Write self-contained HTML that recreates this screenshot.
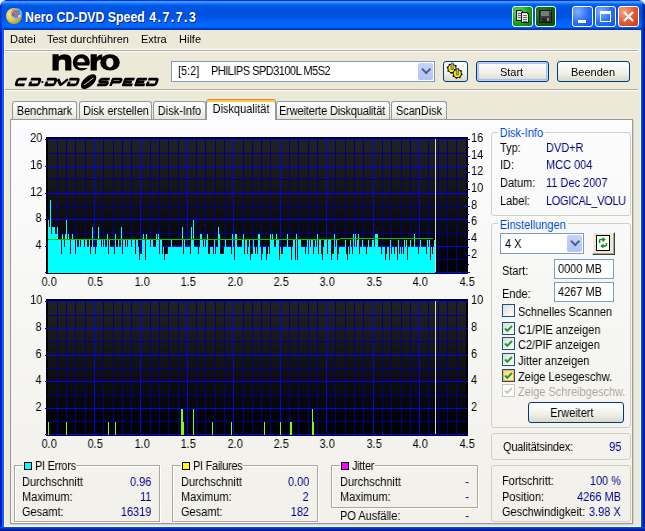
<!DOCTYPE html>
<html><head><meta charset="utf-8"><style>
*{margin:0;padding:0;box-sizing:border-box}
html,body{width:645px;height:531px;overflow:hidden;background:#f6f2e2}
body{position:relative;-webkit-font-smoothing:antialiased;font-family:"Liberation Sans",sans-serif;font-size:11px;color:#000}
#win{position:absolute;left:0;top:0;width:645px;height:531px;background:#ece9d8;border-radius:6px 6px 0 0;overflow:hidden}
.fr{position:absolute}
#frameX{position:absolute;left:0;top:0;width:645px;height:531px;border:4px solid #0842db;border-top:0;
  box-shadow:inset 2px 0 0 #0019cf,inset -2px 0 0 #0019cf, inset 0 -2px 0 #001ea8}
#title{position:absolute;left:0;top:0;width:645px;height:30px;border-radius:6px 6px 0 0;
  background:linear-gradient(to bottom,#0831d9 0,#0831d9 1px,#3d95ff 1px,#3d95ff 3px,#1a80ff 3px,#0a6ef5 4px,#0060ea 5px,#0054e2 7px,#0053e0 17px,#0058ea 18px,#005ef2 21px,#0066fe 22px,#0066fe 27px,#0050e0 28px,#0032b4 29px,#0032b4 30px)}
#ttl{position:absolute;left:25px;top:9px;font:bold 14px/16px "Liberation Sans",sans-serif;color:#fff;text-shadow:1px 1px 0 #0a1e8c;white-space:nowrap;transform:scaleX(0.88);transform-origin:0 0}
.tb{position:absolute;top:6px;width:21px;height:21px;border:1px solid #fff;border-radius:3px}
.tb.g1{background:radial-gradient(circle at 30% 30%,#60e060,#10a010 60%,#0a700a)}
.tb.g2{background:radial-gradient(circle at 30% 30%,#208a20,#0a600a 60%,#055005)}
.tb.bl{background:radial-gradient(circle at 25% 25%,#7fb0ff,#2a6df5 55%,#1550e0)}
.tb.rd{background:radial-gradient(circle at 25% 25%,#f8a080,#e05a30 55%,#c83a10)}
.t{position:absolute;white-space:nowrap;line-height:13px;font-size:12px;will-change:transform;transform:scaleX(0.915);transform-origin:0 0}
.tr{transform-origin:100% 0}
.t.s11{font-size:11px;transform:none}
.v{color:#000080}
.cap{color:#0046d5;padding:0 2px}
.dis{color:#aca899}
.ax{color:#000}
.hs{position:absolute;left:4px;width:637px;height:3px;border-top:1px solid #fff;border-bottom:1px solid #fff;background:#aca899;background-clip:content-box;}
#nero{position:absolute;left:50px;top:45px;font:bold 30px "Liberation Sans",sans-serif;letter-spacing:-1.5px;color:#111;transform:scaleX(1.05);transform-origin:left}
.cb{position:absolute;background:#fff;border:1px solid #7f9db9}
.cbb{position:absolute;background:linear-gradient(#c6d3f7,#b0c4f4);border-radius:2px}
.cbb::after{content:"";position:absolute;left:4px;top:5px;width:5px;height:5px;border-right:2px solid #4d6185;border-bottom:2px solid #4d6185;transform:rotate(45deg) translate(-1px,-2px)}
.btn{position:absolute;border:1px solid #003c74;border-radius:3px;background:linear-gradient(#fff,#f0f0ea 60%,#d8d8cc)}
.btn.def{box-shadow:inset 0 0 0 1px #c0d4f8, inset 0 0 0 2px #a8c0f0}
.btn3{position:absolute;background:#ece9d8;border:1px solid;border-color:#fff #404040 #404040 #fff;box-shadow:inset -1px -1px 0 #aca899}
.ed{position:absolute;background:#fff;border:1px solid #7f9db9}
#panel{position:absolute;left:10px;top:119px;width:623px;height:405px;border:1px solid #919b9c;border-right-width:1px;
  background:linear-gradient(to bottom,#fcfcfe 0%,#f1f0ea 100%);box-shadow:1px 1px 0 #d8d6c8}
.tab{position:absolute;top:101px;height:18px;border:1px solid #919b9c;border-bottom:0;border-radius:3px 3px 0 0;
  background:linear-gradient(#fefefe,#f0f0ea 70%,#e4e3d8)}
.tab span{position:absolute;left:0;right:0;top:3px;text-align:center;white-space:nowrap;will-change:transform;font-size:12px;line-height:13px;transform:scaleX(0.915)}
.tab.sel{top:99px;height:21px;background:#fcfcfe;border-top:1px solid #e68b2c;z-index:2;box-shadow:inset 0 2px 0 #ffc83c}
.tab.sel span{top:3px}
.gb{position:absolute;border:1px solid #d0d0bf;border-radius:3px}
.lg{position:absolute;border:1px solid #aca899}
.lgw{position:absolute;border:1px solid #fff}
.lgc{position:absolute;height:10px}
.sq{position:absolute;width:8px;height:8px;border:1px solid #000}
.ck{position:absolute;width:13px;height:13px;border:1px solid #1c5180;background:linear-gradient(135deg,#dcdcd7,#fff)}
.ck.hot{background:linear-gradient(135deg,#fad688,#fff2c8);box-shadow:inset 0 0 0 1px #f8b636}
.ck.dis{border-color:#cac8bb;background:#fff}
</style></head>
<body><div id="win">
<div id="title"></div>
<div style="position:absolute;left:641px;top:4px;width:4px;height:26px;background:linear-gradient(to right,rgba(0,40,200,0.1),rgba(0,30,160,0.6) 50%,rgba(0,20,120,0.9))"></div>
<div style="position:absolute;left:0;top:5px;width:2px;height:25px;background:linear-gradient(to right,rgba(0,25,180,0.8),rgba(0,40,200,0.3))"></div>
<div id="ttl">Nero CD-DVD Speed<span style="margin-left:5px;letter-spacing:1.7px">4.7.7.3</span></div>
<svg style="position:absolute;left:5px;top:7px" width="19" height="19" viewBox="0 0 19 19">
<defs><radialGradient id="dg" cx="35%" cy="40%" r="70%"><stop offset="0" stop-color="#f8f0a0"/><stop offset="0.55" stop-color="#e0c848"/><stop offset="1" stop-color="#b09020"/></radialGradient>
<clipPath id="ic"><circle cx="11.5" cy="6.8" r="4.2"/></clipPath></defs>
<circle cx="9" cy="9" r="8" fill="url(#dg)"/>
<circle cx="11.5" cy="6.8" r="5.3" fill="#c8ccd8" stroke="#8890a0" stroke-width="0.8"/>
<g clip-path="url(#ic)">
<rect x="6" y="1" width="11" height="11" fill="#3a9ae8"/>
<path d="M8 2 L11 4 L13 8 L15 10 L13 11 L11 8 L8 5 Z" fill="#f06030"/>
<path d="M12 2 L16 3 L15 5 Z" fill="#30a040"/>
<path d="M7 5 L9 8 L8 10 L6 8 Z" fill="#c01010"/>
<circle cx="14.5" cy="9.5" r="1.3" fill="#fff"/>
</g>
</svg>
<div class="tb g1" style="left:512px"></div>
<div class="tb g2" style="left:535px"></div>
<div class="tb bl" style="left:572px"></div>
<div class="tb bl" style="left:595px"></div>
<div class="tb rd" style="left:618px"></div>
<svg style="position:absolute;left:512px;top:6px" width="21" height="21" shape-rendering="crispEdges">
<path d="M4.5 4.5H9.5L11 6V14.5H4.5Z" fill="#d8d8d8" stroke="#1a1a1a"/>
<path d="M6 7H9M6 9H9M6 11H9" stroke="#707070"/>
<path d="M9.5 6.5H15L16.5 8V16.5H9.5Z" fill="#e4e4e4" stroke="#1a1a1a"/>
<path d="M11 9H15M11 11H15M11 13H15M11 15H15" stroke="#707070"/>
</svg>
<svg style="position:absolute;left:535px;top:6px" width="21" height="21" shape-rendering="crispEdges">
<path d="M4.5 4.5H16.5V16.5H4.5Z" fill="#3c3c3c" stroke="#181818"/>
<rect x="6" y="5" width="8" height="5" fill="#7a7a7a"/>
<rect x="7" y="12" width="8" height="4" fill="#262626"/>
<rect x="12" y="12" width="2" height="3" fill="#8a8a8a"/>
<rect x="15" y="5" width="1" height="1" fill="#30c030"/>
</svg>
<div style="position:absolute;left:578px;top:20px;width:8px;height:3px;background:#fff"></div>
<div style="position:absolute;left:600px;top:11px;width:9px;height:9px;border:1px solid #fff;border-top-width:3px;box-sizing:border-box;width:11px;height:11px"></div>
<svg style="position:absolute;left:618px;top:6px" width="21" height="21"><path d="M6 6L15 15M15 6L6 15" stroke="#fff" stroke-width="2.2"/></svg>
<div class="t s11" style="left:10px;top:33px;">Datei</div>
<div class="t s11" style="left:47px;top:33px;">Test durchführen</div>
<div class="t s11" style="left:141px;top:33px;">Extra</div>
<div class="t s11" style="left:179px;top:33px;">Hilfe</div>
<div style="position:absolute;left:4px;top:49px;width:637px;height:1px;background:#fff"></div>
<div style="position:absolute;left:4px;top:50px;width:634px;height:1px;background:#aca899"></div>
<div style="position:absolute;left:4px;top:51px;width:635px;height:1px;background:#fff"></div>
<div style="position:absolute;left:4px;top:89px;width:634px;height:1px;background:#aca899"></div>
<div style="position:absolute;left:4px;top:90px;width:635px;height:1px;background:#fff"></div>
<svg style="position:absolute;left:0;top:0" width="170" height="95" viewBox="0 0 170 95">
<g fill="#000">
<path d="M52.5 54.2H58.7V56.6Q61 54.2 64.6 54.2Q71.4 54.2 71.4 60.6V70.6H65.2V61.8Q65.2 59.4 62.1 59.4Q58.7 59.4 58.7 62.4V70.6H52.5Z"/>
<ellipse cx="81.3" cy="62.4" rx="8.5" ry="8.2"/>
<path d="M90.6 54.2H96.8V57.2Q98.8 54.2 102.2 54.2V59.6Q96.8 59.6 96.8 63.6V70.6H90.6Z"/>
<ellipse cx="110" cy="62.4" rx="9.8" ry="8.2"/>
</g>
<path d="M77.3 62.3Q77.5 58.2 81 58.2Q84.7 58.2 84.8 62.3Z" fill="#ece9d8"/>
<path d="M77.2 65.4H90.2V68H82Q78 68 77.2 65.4Z" fill="#ece9d8"/>
<ellipse cx="109.8" cy="62.7" rx="3.7" ry="4.8" fill="#ece9d8"/>
<g fill="none" stroke="#000" stroke-width="2.6" stroke-linejoin="round"><path transform="translate(14.2,86) skewX(-20)" d="M10 -6.9 H2.8 Q1.1 -6.9 1.1 -5.2 V-2.8 Q1.1 -1.1 2.8 -1.1 H10"/><path transform="translate(28.2,86) skewX(-20)" d="M0.2 -6.9 H7.8 Q9.6 -6.9 9.6 -5.2 V-2.8 Q9.6 -1.1 7.8 -1.1 H1.1 V-4.6"/><path transform="translate(44.2,86) skewX(-20)" d="M0.2 -6.9 H7.8 Q9.6 -6.9 9.6 -5.2 V-2.8 Q9.6 -1.1 7.8 -1.1 H1.1 V-4.6"/><path transform="translate(55.2,86) skewX(-20)" d="M0.3 -6.9 L4.6 -1.6 Q5.2 -0.9 5.8 -1.6 L10.2 -6.9"/><path transform="translate(66.6,86) skewX(-20)" d="M0.2 -6.9 H7.8 Q9.6 -6.9 9.6 -5.2 V-2.8 Q9.6 -1.1 7.8 -1.1 H1.1 V-4.6"/><path transform="translate(96.8,86) skewX(-20)" d="M10.4 -6.9 H2.8 Q1.1 -6.9 1.1 -5.4 Q1.1 -4 2.8 -4 H7.9 Q9.6 -4 9.6 -2.6 Q9.6 -1.1 7.9 -1.1 H0"/><path transform="translate(109.4,86) skewX(-20)" d="M1.1 0 V-6.9 H7.9 Q9.6 -6.9 9.6 -5.3 Q9.6 -3.7 7.9 -3.7 H1.1"/><path transform="translate(121.8,86) skewX(-20)" d="M10.2 -6.9 H1.1 V-1.1 H10.2 M1.1 -4 H8.6"/><path transform="translate(134.2,86) skewX(-20)" d="M10.2 -6.9 H1.1 V-1.1 H10.2 M1.1 -4 H8.6"/><path transform="translate(145.6,86) skewX(-20)" d="M0.2 -6.9 H7.8 Q9.6 -6.9 9.6 -5.2 V-2.8 Q9.6 -1.1 7.8 -1.1 H1.1 V-4.6"/></g>
<circle cx="42.4" cy="82" r="1.1" fill="#000"/>
<ellipse cx="88.6" cy="81.6" rx="9.4" ry="5" transform="rotate(-42 88.6 81.6)" fill="#000"/>
<path d="M84 85L93.5 78" stroke="#ece9d8" stroke-width="0.9"/>
</svg>
<div class="cb" style="left:171px;top:61px;width:264px;height:21px"><div class="cbb" style="right:1px;top:1px;width:15px;height:17px"></div></div>
<div class="t " style="left:178px;top:65px;">[5:2]</div>
<div class="t " style="left:211px;top:65px;letter-spacing:-0.55px">PHILIPS SPD3100L M5S2</div>
<div class="btn" style="left:443px;top:61px;width:25px;height:21px"></div>
<svg style="position:absolute;left:441px;top:59px" width="28" height="25" viewBox="0 0 28 25">
<polygon points="16.49,10.51 14.57,11.80 14.09,14.07 11.82,13.62 9.89,14.89 8.60,12.97 6.33,12.49 6.78,10.22 5.51,8.29 7.43,7.00 7.91,4.73 10.18,5.18 12.11,3.91 13.40,5.83 15.67,6.31 15.22,8.58" fill="#000"/>
<circle cx="11" cy="9.4" r="3.6" fill="#f8f000"/>
<polygon points="21.79,15.71 19.87,17.00 19.39,19.27 17.12,18.82 15.19,20.09 13.90,18.17 11.63,17.69 12.08,15.42 10.81,13.49 12.73,12.20 13.21,9.93 15.48,10.38 17.41,9.11 18.70,11.03 20.97,11.51 20.52,13.78" fill="#000"/>
<circle cx="16.3" cy="14.6" r="3.6" fill="#f8f000"/>
<rect x="10" y="4" width="2.2" height="6.5" fill="#a8a8b8" stroke="#404048" stroke-width="0.6"/>
<rect x="15.2" y="9.4" width="2.2" height="6.5" fill="#a8a8b8" stroke="#404048" stroke-width="0.6"/>
</svg>
<div class="btn def" style="left:476px;top:61px;width:73px;height:21px"></div>
<div class="t s11" style="left:497px;top:66px;width:29px;text-align:center">Start</div>
<div class="btn" style="left:557px;top:61px;width:73px;height:21px"></div>
<div class="t s11" style="left:571px;top:66px;">Beenden</div>
<div id="panel"></div>
<div class="tab" style="left:12px;width:65px"><span>Benchmark</span></div>
<div class="tab" style="left:79px;width:73px"><span>Disk erstellen</span></div>
<div class="tab" style="left:153px;width:53px"><span>Disk-Info</span></div>
<div class="tab" style="left:276px;width:114px"><span><i style="font-style:normal;letter-spacing:-0.15px;position:relative;left:-3px">Erweiterte Diskqualität</i></span></div>
<div class="tab" style="left:391px;width:56px"><span>ScanDisk</span></div>
<div class="tab sel" style="left:206px;width:70px"><span>Diskqualität</span></div>
<svg class="ch" width="645" height="200" style="position:absolute;left:0;top:127px" shape-rendering="crispEdges"><defs><linearGradient id="bg137" x1="0" y1="0" x2="0" y2="1"><stop offset="0" stop-color="#222"/><stop offset="1" stop-color="#000"/></linearGradient></defs><rect x="46" y="10" width="22" height="137" fill="#000"/><rect x="48" y="10" width="420" height="137" fill="#000"/><rect x="46" y="11" width="422" height="136" fill="#000"/><rect x="48" y="12" width="418" height="133" fill="url(#bg137)"/><rect x="57" y="12" width="1" height="135" fill="#000090"/><rect x="66" y="12" width="1" height="135" fill="#000090"/><rect x="75" y="12" width="1" height="135" fill="#000090"/><rect x="85" y="12" width="1" height="135" fill="#000090"/><rect x="94" y="12" width="1" height="135" fill="#0000ff"/><rect x="103" y="12" width="1" height="135" fill="#000090"/><rect x="113" y="12" width="1" height="135" fill="#000090"/><rect x="122" y="12" width="1" height="135" fill="#000090"/><rect x="131" y="12" width="1" height="135" fill="#000090"/><rect x="140" y="12" width="1" height="135" fill="#0000ff"/><rect x="150" y="12" width="1" height="135" fill="#000090"/><rect x="159" y="12" width="1" height="135" fill="#000090"/><rect x="168" y="12" width="1" height="135" fill="#000090"/><rect x="178" y="12" width="1" height="135" fill="#000090"/><rect x="187" y="12" width="1" height="135" fill="#0000ff"/><rect x="196" y="12" width="1" height="135" fill="#000090"/><rect x="205" y="12" width="1" height="135" fill="#000090"/><rect x="215" y="12" width="1" height="135" fill="#000090"/><rect x="224" y="12" width="1" height="135" fill="#000090"/><rect x="233" y="12" width="1" height="135" fill="#0000ff"/><rect x="243" y="12" width="1" height="135" fill="#000090"/><rect x="252" y="12" width="1" height="135" fill="#000090"/><rect x="261" y="12" width="1" height="135" fill="#000090"/><rect x="270" y="12" width="1" height="135" fill="#000090"/><rect x="280" y="12" width="1" height="135" fill="#0000ff"/><rect x="289" y="12" width="1" height="135" fill="#000090"/><rect x="298" y="12" width="1" height="135" fill="#000090"/><rect x="308" y="12" width="1" height="135" fill="#000090"/><rect x="317" y="12" width="1" height="135" fill="#000090"/><rect x="326" y="12" width="1" height="135" fill="#0000ff"/><rect x="335" y="12" width="1" height="135" fill="#000090"/><rect x="345" y="12" width="1" height="135" fill="#000090"/><rect x="354" y="12" width="1" height="135" fill="#000090"/><rect x="363" y="12" width="1" height="135" fill="#000090"/><rect x="373" y="12" width="1" height="135" fill="#0000ff"/><rect x="382" y="12" width="1" height="135" fill="#000090"/><rect x="391" y="12" width="1" height="135" fill="#000090"/><rect x="401" y="12" width="1" height="135" fill="#000090"/><rect x="410" y="12" width="1" height="135" fill="#000090"/><rect x="419" y="12" width="1" height="135" fill="#0000ff"/><rect x="428" y="12" width="1" height="135" fill="#000090"/><rect x="438" y="12" width="1" height="135" fill="#000090"/><rect x="447" y="12" width="1" height="135" fill="#000090"/><rect x="456" y="12" width="1" height="135" fill="#000090"/><rect x="45" y="12" width="423" height="1" fill="#0000ff"/><rect x="46" y="26" width="422" height="1" fill="#000090"/><rect x="45" y="39" width="423" height="1" fill="#0000ff"/><rect x="46" y="52" width="422" height="1" fill="#000090"/><rect x="45" y="66" width="423" height="1" fill="#0000ff"/><rect x="46" y="79" width="422" height="1" fill="#000090"/><rect x="45" y="92" width="423" height="1" fill="#0000ff"/><rect x="46" y="106" width="422" height="1" fill="#000090"/><rect x="45" y="119" width="423" height="1" fill="#0000ff"/><rect x="46" y="132" width="422" height="1" fill="#000090"/><rect x="45" y="145" width="423" height="1" fill="#0000ff"/><rect x="48" y="93" width="1" height="53" fill="#00ffff"/><rect x="49" y="100" width="1" height="46" fill="#00ffff"/><rect x="50" y="73" width="1" height="73" fill="#00ffff"/><rect x="51" y="107" width="1" height="39" fill="#00ffff"/><rect x="52" y="100" width="1" height="46" fill="#00ffff"/><rect x="53" y="100" width="1" height="46" fill="#00ffff"/><rect x="54" y="100" width="1" height="46" fill="#00ffff"/><rect x="55" y="107" width="1" height="39" fill="#00ffff"/><rect x="56" y="107" width="1" height="39" fill="#00ffff"/><rect x="57" y="100" width="1" height="46" fill="#00ffff"/><rect x="58" y="113" width="1" height="33" fill="#00ffff"/><rect x="59" y="113" width="1" height="33" fill="#00ffff"/><rect x="60" y="113" width="1" height="33" fill="#00ffff"/><rect x="61" y="127" width="1" height="19" fill="#00ffff"/><rect x="62" y="107" width="1" height="39" fill="#00ffff"/><rect x="63" y="113" width="1" height="33" fill="#00ffff"/><rect x="64" y="120" width="1" height="26" fill="#00ffff"/><rect x="65" y="107" width="1" height="39" fill="#00ffff"/><rect x="66" y="93" width="1" height="53" fill="#00ffff"/><rect x="67" y="113" width="1" height="33" fill="#00ffff"/><rect x="68" y="107" width="1" height="39" fill="#00ffff"/><rect x="69" y="113" width="1" height="33" fill="#00ffff"/><rect x="70" y="127" width="1" height="19" fill="#00ffff"/><rect x="71" y="113" width="1" height="33" fill="#00ffff"/><rect x="72" y="107" width="1" height="39" fill="#00ffff"/><rect x="73" y="113" width="1" height="33" fill="#00ffff"/><rect x="74" y="113" width="1" height="33" fill="#00ffff"/><rect x="75" y="127" width="1" height="19" fill="#00ffff"/><rect x="76" y="113" width="1" height="33" fill="#00ffff"/><rect x="77" y="120" width="1" height="26" fill="#00ffff"/><rect x="78" y="120" width="1" height="26" fill="#00ffff"/><rect x="79" y="113" width="1" height="33" fill="#00ffff"/><rect x="80" y="120" width="1" height="26" fill="#00ffff"/><rect x="81" y="113" width="1" height="33" fill="#00ffff"/><rect x="82" y="113" width="1" height="33" fill="#00ffff"/><rect x="83" y="113" width="1" height="33" fill="#00ffff"/><rect x="84" y="120" width="1" height="26" fill="#00ffff"/><rect x="85" y="113" width="1" height="33" fill="#00ffff"/><rect x="86" y="113" width="1" height="33" fill="#00ffff"/><rect x="87" y="120" width="1" height="26" fill="#00ffff"/><rect x="88" y="120" width="1" height="26" fill="#00ffff"/><rect x="89" y="113" width="1" height="33" fill="#00ffff"/><rect x="90" y="127" width="1" height="19" fill="#00ffff"/><rect x="91" y="120" width="1" height="26" fill="#00ffff"/><rect x="92" y="100" width="1" height="46" fill="#00ffff"/><rect x="93" y="120" width="1" height="26" fill="#00ffff"/><rect x="94" y="120" width="1" height="26" fill="#00ffff"/><rect x="95" y="127" width="1" height="19" fill="#00ffff"/><rect x="96" y="120" width="1" height="26" fill="#00ffff"/><rect x="97" y="113" width="1" height="33" fill="#00ffff"/><rect x="98" y="100" width="1" height="46" fill="#00ffff"/><rect x="99" y="113" width="1" height="33" fill="#00ffff"/><rect x="100" y="113" width="1" height="33" fill="#00ffff"/><rect x="101" y="120" width="1" height="26" fill="#00ffff"/><rect x="102" y="113" width="1" height="33" fill="#00ffff"/><rect x="103" y="120" width="1" height="26" fill="#00ffff"/><rect x="104" y="113" width="1" height="33" fill="#00ffff"/><rect x="105" y="120" width="1" height="26" fill="#00ffff"/><rect x="106" y="120" width="1" height="26" fill="#00ffff"/><rect x="107" y="107" width="1" height="39" fill="#00ffff"/><rect x="108" y="127" width="1" height="19" fill="#00ffff"/><rect x="109" y="113" width="1" height="33" fill="#00ffff"/><rect x="110" y="120" width="1" height="26" fill="#00ffff"/><rect x="111" y="120" width="1" height="26" fill="#00ffff"/><rect x="112" y="120" width="1" height="26" fill="#00ffff"/><rect x="113" y="120" width="1" height="26" fill="#00ffff"/><rect x="114" y="127" width="1" height="19" fill="#00ffff"/><rect x="115" y="107" width="1" height="39" fill="#00ffff"/><rect x="116" y="120" width="1" height="26" fill="#00ffff"/><rect x="117" y="120" width="1" height="26" fill="#00ffff"/><rect x="118" y="113" width="1" height="33" fill="#00ffff"/><rect x="119" y="120" width="1" height="26" fill="#00ffff"/><rect x="120" y="120" width="1" height="26" fill="#00ffff"/><rect x="121" y="100" width="1" height="46" fill="#00ffff"/><rect x="122" y="127" width="1" height="19" fill="#00ffff"/><rect x="123" y="113" width="1" height="33" fill="#00ffff"/><rect x="124" y="113" width="1" height="33" fill="#00ffff"/><rect x="125" y="120" width="1" height="26" fill="#00ffff"/><rect x="126" y="113" width="1" height="33" fill="#00ffff"/><rect x="127" y="120" width="1" height="26" fill="#00ffff"/><rect x="128" y="113" width="1" height="33" fill="#00ffff"/><rect x="129" y="113" width="1" height="33" fill="#00ffff"/><rect x="130" y="113" width="1" height="33" fill="#00ffff"/><rect x="131" y="120" width="1" height="26" fill="#00ffff"/><rect x="132" y="113" width="1" height="33" fill="#00ffff"/><rect x="133" y="113" width="1" height="33" fill="#00ffff"/><rect x="134" y="113" width="1" height="33" fill="#00ffff"/><rect x="135" y="127" width="1" height="19" fill="#00ffff"/><rect x="136" y="113" width="1" height="33" fill="#00ffff"/><rect x="137" y="113" width="1" height="33" fill="#00ffff"/><rect x="138" y="120" width="1" height="26" fill="#00ffff"/><rect x="139" y="133" width="1" height="13" fill="#00ffff"/><rect x="140" y="127" width="1" height="19" fill="#00ffff"/><rect x="141" y="127" width="1" height="19" fill="#00ffff"/><rect x="142" y="113" width="1" height="33" fill="#00ffff"/><rect x="143" y="107" width="1" height="39" fill="#00ffff"/><rect x="144" y="113" width="1" height="33" fill="#00ffff"/><rect x="145" y="133" width="1" height="13" fill="#00ffff"/><rect x="146" y="107" width="1" height="39" fill="#00ffff"/><rect x="147" y="113" width="1" height="33" fill="#00ffff"/><rect x="148" y="113" width="1" height="33" fill="#00ffff"/><rect x="149" y="113" width="1" height="33" fill="#00ffff"/><rect x="150" y="120" width="1" height="26" fill="#00ffff"/><rect x="151" y="113" width="1" height="33" fill="#00ffff"/><rect x="152" y="113" width="1" height="33" fill="#00ffff"/><rect x="153" y="120" width="1" height="26" fill="#00ffff"/><rect x="154" y="120" width="1" height="26" fill="#00ffff"/><rect x="155" y="120" width="1" height="26" fill="#00ffff"/><rect x="156" y="107" width="1" height="39" fill="#00ffff"/><rect x="157" y="113" width="1" height="33" fill="#00ffff"/><rect x="158" y="107" width="1" height="39" fill="#00ffff"/><rect x="159" y="127" width="1" height="19" fill="#00ffff"/><rect x="160" y="113" width="1" height="33" fill="#00ffff"/><rect x="161" y="113" width="1" height="33" fill="#00ffff"/><rect x="162" y="127" width="1" height="19" fill="#00ffff"/><rect x="163" y="120" width="1" height="26" fill="#00ffff"/><rect x="164" y="133" width="1" height="13" fill="#00ffff"/><rect x="165" y="127" width="1" height="19" fill="#00ffff"/><rect x="166" y="127" width="1" height="19" fill="#00ffff"/><rect x="167" y="127" width="1" height="19" fill="#00ffff"/><rect x="168" y="120" width="1" height="26" fill="#00ffff"/><rect x="169" y="120" width="1" height="26" fill="#00ffff"/><rect x="170" y="120" width="1" height="26" fill="#00ffff"/><rect x="171" y="113" width="1" height="33" fill="#00ffff"/><rect x="172" y="120" width="1" height="26" fill="#00ffff"/><rect x="173" y="120" width="1" height="26" fill="#00ffff"/><rect x="174" y="120" width="1" height="26" fill="#00ffff"/><rect x="175" y="120" width="1" height="26" fill="#00ffff"/><rect x="176" y="120" width="1" height="26" fill="#00ffff"/><rect x="177" y="120" width="1" height="26" fill="#00ffff"/><rect x="178" y="120" width="1" height="26" fill="#00ffff"/><rect x="179" y="120" width="1" height="26" fill="#00ffff"/><rect x="180" y="120" width="1" height="26" fill="#00ffff"/><rect x="181" y="120" width="1" height="26" fill="#00ffff"/><rect x="182" y="100" width="1" height="46" fill="#00ffff"/><rect x="183" y="127" width="1" height="19" fill="#00ffff"/><rect x="184" y="113" width="1" height="33" fill="#00ffff"/><rect x="185" y="120" width="1" height="26" fill="#00ffff"/><rect x="186" y="120" width="1" height="26" fill="#00ffff"/><rect x="187" y="120" width="1" height="26" fill="#00ffff"/><rect x="188" y="120" width="1" height="26" fill="#00ffff"/><rect x="189" y="120" width="1" height="26" fill="#00ffff"/><rect x="190" y="127" width="1" height="19" fill="#00ffff"/><rect x="191" y="100" width="1" height="46" fill="#00ffff"/><rect x="192" y="113" width="1" height="33" fill="#00ffff"/><rect x="193" y="93" width="1" height="53" fill="#00ffff"/><rect x="194" y="120" width="1" height="26" fill="#00ffff"/><rect x="195" y="120" width="1" height="26" fill="#00ffff"/><rect x="196" y="120" width="1" height="26" fill="#00ffff"/><rect x="197" y="120" width="1" height="26" fill="#00ffff"/><rect x="198" y="127" width="1" height="19" fill="#00ffff"/><rect x="199" y="120" width="1" height="26" fill="#00ffff"/><rect x="200" y="107" width="1" height="39" fill="#00ffff"/><rect x="201" y="107" width="1" height="39" fill="#00ffff"/><rect x="202" y="113" width="1" height="33" fill="#00ffff"/><rect x="203" y="120" width="1" height="26" fill="#00ffff"/><rect x="204" y="113" width="1" height="33" fill="#00ffff"/><rect x="205" y="120" width="1" height="26" fill="#00ffff"/><rect x="206" y="113" width="1" height="33" fill="#00ffff"/><rect x="207" y="107" width="1" height="39" fill="#00ffff"/><rect x="208" y="127" width="1" height="19" fill="#00ffff"/><rect x="209" y="127" width="1" height="19" fill="#00ffff"/><rect x="210" y="120" width="1" height="26" fill="#00ffff"/><rect x="211" y="120" width="1" height="26" fill="#00ffff"/><rect x="212" y="120" width="1" height="26" fill="#00ffff"/><rect x="213" y="127" width="1" height="19" fill="#00ffff"/><rect x="214" y="113" width="1" height="33" fill="#00ffff"/><rect x="215" y="127" width="1" height="19" fill="#00ffff"/><rect x="216" y="120" width="1" height="26" fill="#00ffff"/><rect x="217" y="120" width="1" height="26" fill="#00ffff"/><rect x="218" y="100" width="1" height="46" fill="#00ffff"/><rect x="219" y="107" width="1" height="39" fill="#00ffff"/><rect x="220" y="127" width="1" height="19" fill="#00ffff"/><rect x="221" y="127" width="1" height="19" fill="#00ffff"/><rect x="222" y="127" width="1" height="19" fill="#00ffff"/><rect x="223" y="127" width="1" height="19" fill="#00ffff"/><rect x="224" y="120" width="1" height="26" fill="#00ffff"/><rect x="225" y="113" width="1" height="33" fill="#00ffff"/><rect x="226" y="120" width="1" height="26" fill="#00ffff"/><rect x="227" y="120" width="1" height="26" fill="#00ffff"/><rect x="228" y="120" width="1" height="26" fill="#00ffff"/><rect x="229" y="120" width="1" height="26" fill="#00ffff"/><rect x="230" y="120" width="1" height="26" fill="#00ffff"/><rect x="231" y="127" width="1" height="19" fill="#00ffff"/><rect x="232" y="107" width="1" height="39" fill="#00ffff"/><rect x="233" y="120" width="1" height="26" fill="#00ffff"/><rect x="234" y="133" width="1" height="13" fill="#00ffff"/><rect x="235" y="107" width="1" height="39" fill="#00ffff"/><rect x="236" y="107" width="1" height="39" fill="#00ffff"/><rect x="237" y="120" width="1" height="26" fill="#00ffff"/><rect x="238" y="120" width="1" height="26" fill="#00ffff"/><rect x="239" y="120" width="1" height="26" fill="#00ffff"/><rect x="240" y="120" width="1" height="26" fill="#00ffff"/><rect x="241" y="120" width="1" height="26" fill="#00ffff"/><rect x="242" y="113" width="1" height="33" fill="#00ffff"/><rect x="243" y="107" width="1" height="39" fill="#00ffff"/><rect x="244" y="127" width="1" height="19" fill="#00ffff"/><rect x="245" y="113" width="1" height="33" fill="#00ffff"/><rect x="246" y="113" width="1" height="33" fill="#00ffff"/><rect x="247" y="127" width="1" height="19" fill="#00ffff"/><rect x="248" y="120" width="1" height="26" fill="#00ffff"/><rect x="249" y="113" width="1" height="33" fill="#00ffff"/><rect x="250" y="133" width="1" height="13" fill="#00ffff"/><rect x="251" y="127" width="1" height="19" fill="#00ffff"/><rect x="252" y="127" width="1" height="19" fill="#00ffff"/><rect x="253" y="113" width="1" height="33" fill="#00ffff"/><rect x="254" y="120" width="1" height="26" fill="#00ffff"/><rect x="255" y="127" width="1" height="19" fill="#00ffff"/><rect x="256" y="120" width="1" height="26" fill="#00ffff"/><rect x="257" y="127" width="1" height="19" fill="#00ffff"/><rect x="258" y="107" width="1" height="39" fill="#00ffff"/><rect x="259" y="107" width="1" height="39" fill="#00ffff"/><rect x="260" y="120" width="1" height="26" fill="#00ffff"/><rect x="261" y="133" width="1" height="13" fill="#00ffff"/><rect x="262" y="127" width="1" height="19" fill="#00ffff"/><rect x="263" y="120" width="1" height="26" fill="#00ffff"/><rect x="264" y="120" width="1" height="26" fill="#00ffff"/><rect x="265" y="120" width="1" height="26" fill="#00ffff"/><rect x="266" y="133" width="1" height="13" fill="#00ffff"/><rect x="267" y="127" width="1" height="19" fill="#00ffff"/><rect x="268" y="120" width="1" height="26" fill="#00ffff"/><rect x="269" y="127" width="1" height="19" fill="#00ffff"/><rect x="270" y="107" width="1" height="39" fill="#00ffff"/><rect x="271" y="113" width="1" height="33" fill="#00ffff"/><rect x="272" y="107" width="1" height="39" fill="#00ffff"/><rect x="273" y="113" width="1" height="33" fill="#00ffff"/><rect x="274" y="120" width="1" height="26" fill="#00ffff"/><rect x="275" y="120" width="1" height="26" fill="#00ffff"/><rect x="276" y="107" width="1" height="39" fill="#00ffff"/><rect x="277" y="113" width="1" height="33" fill="#00ffff"/><rect x="278" y="113" width="1" height="33" fill="#00ffff"/><rect x="279" y="133" width="1" height="13" fill="#00ffff"/><rect x="280" y="120" width="1" height="26" fill="#00ffff"/><rect x="281" y="127" width="1" height="19" fill="#00ffff"/><rect x="282" y="127" width="1" height="19" fill="#00ffff"/><rect x="283" y="120" width="1" height="26" fill="#00ffff"/><rect x="284" y="120" width="1" height="26" fill="#00ffff"/><rect x="285" y="120" width="1" height="26" fill="#00ffff"/><rect x="286" y="120" width="1" height="26" fill="#00ffff"/><rect x="287" y="107" width="1" height="39" fill="#00ffff"/><rect x="288" y="120" width="1" height="26" fill="#00ffff"/><rect x="289" y="120" width="1" height="26" fill="#00ffff"/><rect x="290" y="120" width="1" height="26" fill="#00ffff"/><rect x="291" y="133" width="1" height="13" fill="#00ffff"/><rect x="292" y="120" width="1" height="26" fill="#00ffff"/><rect x="293" y="113" width="1" height="33" fill="#00ffff"/><rect x="294" y="113" width="1" height="33" fill="#00ffff"/><rect x="295" y="133" width="1" height="13" fill="#00ffff"/><rect x="296" y="107" width="1" height="39" fill="#00ffff"/><rect x="297" y="133" width="1" height="13" fill="#00ffff"/><rect x="298" y="113" width="1" height="33" fill="#00ffff"/><rect x="299" y="113" width="1" height="33" fill="#00ffff"/><rect x="300" y="113" width="1" height="33" fill="#00ffff"/><rect x="301" y="120" width="1" height="26" fill="#00ffff"/><rect x="302" y="120" width="1" height="26" fill="#00ffff"/><rect x="303" y="120" width="1" height="26" fill="#00ffff"/><rect x="304" y="120" width="1" height="26" fill="#00ffff"/><rect x="305" y="127" width="1" height="19" fill="#00ffff"/><rect x="306" y="120" width="1" height="26" fill="#00ffff"/><rect x="307" y="113" width="1" height="33" fill="#00ffff"/><rect x="308" y="127" width="1" height="19" fill="#00ffff"/><rect x="309" y="113" width="1" height="33" fill="#00ffff"/><rect x="310" y="120" width="1" height="26" fill="#00ffff"/><rect x="311" y="113" width="1" height="33" fill="#00ffff"/><rect x="312" y="113" width="1" height="33" fill="#00ffff"/><rect x="313" y="127" width="1" height="19" fill="#00ffff"/><rect x="314" y="120" width="1" height="26" fill="#00ffff"/><rect x="315" y="113" width="1" height="33" fill="#00ffff"/><rect x="316" y="120" width="1" height="26" fill="#00ffff"/><rect x="317" y="107" width="1" height="39" fill="#00ffff"/><rect x="318" y="127" width="1" height="19" fill="#00ffff"/><rect x="319" y="113" width="1" height="33" fill="#00ffff"/><rect x="320" y="113" width="1" height="33" fill="#00ffff"/><rect x="321" y="127" width="1" height="19" fill="#00ffff"/><rect x="322" y="133" width="1" height="13" fill="#00ffff"/><rect x="323" y="120" width="1" height="26" fill="#00ffff"/><rect x="324" y="113" width="1" height="33" fill="#00ffff"/><rect x="325" y="113" width="1" height="33" fill="#00ffff"/><rect x="326" y="113" width="1" height="33" fill="#00ffff"/><rect x="327" y="127" width="1" height="19" fill="#00ffff"/><rect x="328" y="113" width="1" height="33" fill="#00ffff"/><rect x="329" y="113" width="1" height="33" fill="#00ffff"/><rect x="330" y="113" width="1" height="33" fill="#00ffff"/><rect x="331" y="133" width="1" height="13" fill="#00ffff"/><rect x="332" y="127" width="1" height="19" fill="#00ffff"/><rect x="333" y="127" width="1" height="19" fill="#00ffff"/><rect x="334" y="107" width="1" height="39" fill="#00ffff"/><rect x="335" y="120" width="1" height="26" fill="#00ffff"/><rect x="336" y="113" width="1" height="33" fill="#00ffff"/><rect x="337" y="133" width="1" height="13" fill="#00ffff"/><rect x="338" y="127" width="1" height="19" fill="#00ffff"/><rect x="339" y="120" width="1" height="26" fill="#00ffff"/><rect x="340" y="120" width="1" height="26" fill="#00ffff"/><rect x="341" y="120" width="1" height="26" fill="#00ffff"/><rect x="342" y="120" width="1" height="26" fill="#00ffff"/><rect x="343" y="120" width="1" height="26" fill="#00ffff"/><rect x="344" y="120" width="1" height="26" fill="#00ffff"/><rect x="345" y="113" width="1" height="33" fill="#00ffff"/><rect x="346" y="127" width="1" height="19" fill="#00ffff"/><rect x="347" y="133" width="1" height="13" fill="#00ffff"/><rect x="348" y="120" width="1" height="26" fill="#00ffff"/><rect x="349" y="127" width="1" height="19" fill="#00ffff"/><rect x="350" y="113" width="1" height="33" fill="#00ffff"/><rect x="351" y="120" width="1" height="26" fill="#00ffff"/><rect x="352" y="127" width="1" height="19" fill="#00ffff"/><rect x="353" y="107" width="1" height="39" fill="#00ffff"/><rect x="354" y="120" width="1" height="26" fill="#00ffff"/><rect x="355" y="107" width="1" height="39" fill="#00ffff"/><rect x="356" y="120" width="1" height="26" fill="#00ffff"/><rect x="357" y="113" width="1" height="33" fill="#00ffff"/><rect x="358" y="107" width="1" height="39" fill="#00ffff"/><rect x="359" y="127" width="1" height="19" fill="#00ffff"/><rect x="360" y="120" width="1" height="26" fill="#00ffff"/><rect x="361" y="120" width="1" height="26" fill="#00ffff"/><rect x="362" y="113" width="1" height="33" fill="#00ffff"/><rect x="363" y="120" width="1" height="26" fill="#00ffff"/><rect x="364" y="120" width="1" height="26" fill="#00ffff"/><rect x="365" y="120" width="1" height="26" fill="#00ffff"/><rect x="366" y="127" width="1" height="19" fill="#00ffff"/><rect x="367" y="120" width="1" height="26" fill="#00ffff"/><rect x="368" y="113" width="1" height="33" fill="#00ffff"/><rect x="369" y="120" width="1" height="26" fill="#00ffff"/><rect x="370" y="120" width="1" height="26" fill="#00ffff"/><rect x="371" y="120" width="1" height="26" fill="#00ffff"/><rect x="372" y="113" width="1" height="33" fill="#00ffff"/><rect x="373" y="113" width="1" height="33" fill="#00ffff"/><rect x="374" y="120" width="1" height="26" fill="#00ffff"/><rect x="375" y="107" width="1" height="39" fill="#00ffff"/><rect x="376" y="107" width="1" height="39" fill="#00ffff"/><rect x="377" y="107" width="1" height="39" fill="#00ffff"/><rect x="378" y="120" width="1" height="26" fill="#00ffff"/><rect x="379" y="120" width="1" height="26" fill="#00ffff"/><rect x="380" y="120" width="1" height="26" fill="#00ffff"/><rect x="381" y="127" width="1" height="19" fill="#00ffff"/><rect x="382" y="120" width="1" height="26" fill="#00ffff"/><rect x="383" y="120" width="1" height="26" fill="#00ffff"/><rect x="384" y="120" width="1" height="26" fill="#00ffff"/><rect x="385" y="133" width="1" height="13" fill="#00ffff"/><rect x="386" y="127" width="1" height="19" fill="#00ffff"/><rect x="387" y="120" width="1" height="26" fill="#00ffff"/><rect x="388" y="120" width="1" height="26" fill="#00ffff"/><rect x="389" y="133" width="1" height="13" fill="#00ffff"/><rect x="390" y="113" width="1" height="33" fill="#00ffff"/><rect x="391" y="127" width="1" height="19" fill="#00ffff"/><rect x="392" y="120" width="1" height="26" fill="#00ffff"/><rect x="393" y="120" width="1" height="26" fill="#00ffff"/><rect x="394" y="127" width="1" height="19" fill="#00ffff"/><rect x="395" y="120" width="1" height="26" fill="#00ffff"/><rect x="396" y="120" width="1" height="26" fill="#00ffff"/><rect x="397" y="133" width="1" height="13" fill="#00ffff"/><rect x="398" y="113" width="1" height="33" fill="#00ffff"/><rect x="399" y="127" width="1" height="19" fill="#00ffff"/><rect x="400" y="120" width="1" height="26" fill="#00ffff"/><rect x="401" y="127" width="1" height="19" fill="#00ffff"/><rect x="402" y="120" width="1" height="26" fill="#00ffff"/><rect x="403" y="127" width="1" height="19" fill="#00ffff"/><rect x="404" y="113" width="1" height="33" fill="#00ffff"/><rect x="405" y="120" width="1" height="26" fill="#00ffff"/><rect x="406" y="113" width="1" height="33" fill="#00ffff"/><rect x="407" y="133" width="1" height="13" fill="#00ffff"/><rect x="408" y="120" width="1" height="26" fill="#00ffff"/><rect x="409" y="120" width="1" height="26" fill="#00ffff"/><rect x="410" y="113" width="1" height="33" fill="#00ffff"/><rect x="411" y="120" width="1" height="26" fill="#00ffff"/><rect x="412" y="120" width="1" height="26" fill="#00ffff"/><rect x="413" y="120" width="1" height="26" fill="#00ffff"/><rect x="414" y="107" width="1" height="39" fill="#00ffff"/><rect x="415" y="120" width="1" height="26" fill="#00ffff"/><rect x="416" y="120" width="1" height="26" fill="#00ffff"/><rect x="417" y="120" width="1" height="26" fill="#00ffff"/><rect x="418" y="127" width="1" height="19" fill="#00ffff"/><rect x="419" y="120" width="1" height="26" fill="#00ffff"/><rect x="420" y="113" width="1" height="33" fill="#00ffff"/><rect x="421" y="120" width="1" height="26" fill="#00ffff"/><rect x="422" y="120" width="1" height="26" fill="#00ffff"/><rect x="423" y="120" width="1" height="26" fill="#00ffff"/><rect x="424" y="120" width="1" height="26" fill="#00ffff"/><rect x="425" y="120" width="1" height="26" fill="#00ffff"/><rect x="426" y="127" width="1" height="19" fill="#00ffff"/><rect x="427" y="113" width="1" height="33" fill="#00ffff"/><rect x="428" y="120" width="1" height="26" fill="#00ffff"/><rect x="429" y="113" width="1" height="33" fill="#00ffff"/><rect x="430" y="133" width="1" height="13" fill="#00ffff"/><rect x="431" y="120" width="1" height="26" fill="#00ffff"/><rect x="432" y="127" width="1" height="19" fill="#00ffff"/><rect x="433" y="120" width="1" height="26" fill="#00ffff"/><rect x="434" y="113" width="1" height="33" fill="#00ffff"/><rect x="466" y="145" width="4" height="1" fill="#0000ff"/><rect x="466" y="137" width="3" height="1" fill="#0000a0"/><rect x="466" y="128" width="4" height="1" fill="#0000ff"/><rect x="466" y="120" width="3" height="1" fill="#0000a0"/><rect x="466" y="112" width="4" height="1" fill="#0000ff"/><rect x="466" y="103" width="3" height="1" fill="#0000a0"/><rect x="466" y="95" width="4" height="1" fill="#0000ff"/><rect x="466" y="87" width="3" height="1" fill="#0000a0"/><rect x="466" y="79" width="4" height="1" fill="#0000ff"/><rect x="466" y="70" width="3" height="1" fill="#0000a0"/><rect x="466" y="62" width="4" height="1" fill="#0000ff"/><rect x="466" y="54" width="3" height="1" fill="#0000a0"/><rect x="466" y="45" width="4" height="1" fill="#0000ff"/><rect x="466" y="37" width="3" height="1" fill="#0000a0"/><rect x="466" y="29" width="4" height="1" fill="#0000ff"/><rect x="466" y="20" width="3" height="1" fill="#0000a0"/><rect x="466" y="12" width="4" height="1" fill="#0000ff"/><rect x="48" y="112" width="292" height="1" fill="#00c800"/><rect x="340" y="111" width="93" height="1" fill="#00c800"/><rect x="435" y="12" width="1" height="133" fill="#d8d8d8"/></svg><div class="t tr ax" style="right:603px;top:132px;">20</div><div class="t tr ax" style="right:603px;top:159px;">16</div><div class="t tr ax" style="right:603px;top:186px;">12</div><div class="t tr ax" style="right:603px;top:212px;">8</div><div class="t tr ax" style="right:603px;top:239px;">4</div><div class="t ax" style="left:471px;top:132px;">16</div><div class="t ax" style="left:471px;top:149px;">14</div><div class="t ax" style="left:471px;top:165px;">12</div><div class="t ax" style="left:471px;top:182px;">10</div><div class="t ax" style="left:471px;top:199px;">8</div><div class="t ax" style="left:471px;top:215px;">6</div><div class="t ax" style="left:471px;top:232px;">4</div><div class="t ax" style="left:471px;top:248px;">2</div><div class="t ax" style="left:40px;top:276px;width:20px;text-align:center">0.0</div><div class="t ax" style="left:86px;top:276px;width:20px;text-align:center">0.5</div><div class="t ax" style="left:133px;top:276px;width:20px;text-align:center">1.0</div><div class="t ax" style="left:179px;top:276px;width:20px;text-align:center">1.5</div><div class="t ax" style="left:226px;top:276px;width:20px;text-align:center">2.0</div><div class="t ax" style="left:272px;top:276px;width:20px;text-align:center">2.5</div><div class="t ax" style="left:318px;top:276px;width:20px;text-align:center">3.0</div><div class="t ax" style="left:365px;top:276px;width:20px;text-align:center">3.5</div><div class="t ax" style="left:411px;top:276px;width:20px;text-align:center">4.0</div><div class="t ax" style="left:458px;top:276px;width:20px;text-align:center">4.5</div>
<svg class="ch" width="645" height="200" style="position:absolute;left:0;top:289px" shape-rendering="crispEdges"><defs><linearGradient id="bg299" x1="0" y1="0" x2="0" y2="1"><stop offset="0" stop-color="#222"/><stop offset="1" stop-color="#000"/></linearGradient></defs><rect x="46" y="10" width="22" height="137" fill="#000"/><rect x="48" y="10" width="420" height="137" fill="#000"/><rect x="46" y="11" width="422" height="136" fill="#000"/><rect x="48" y="12" width="418" height="133" fill="url(#bg299)"/><rect x="57" y="12" width="1" height="135" fill="#000090"/><rect x="66" y="12" width="1" height="135" fill="#000090"/><rect x="75" y="12" width="1" height="135" fill="#000090"/><rect x="85" y="12" width="1" height="135" fill="#000090"/><rect x="94" y="12" width="1" height="135" fill="#0000ff"/><rect x="103" y="12" width="1" height="135" fill="#000090"/><rect x="113" y="12" width="1" height="135" fill="#000090"/><rect x="122" y="12" width="1" height="135" fill="#000090"/><rect x="131" y="12" width="1" height="135" fill="#000090"/><rect x="140" y="12" width="1" height="135" fill="#0000ff"/><rect x="150" y="12" width="1" height="135" fill="#000090"/><rect x="159" y="12" width="1" height="135" fill="#000090"/><rect x="168" y="12" width="1" height="135" fill="#000090"/><rect x="178" y="12" width="1" height="135" fill="#000090"/><rect x="187" y="12" width="1" height="135" fill="#0000ff"/><rect x="196" y="12" width="1" height="135" fill="#000090"/><rect x="205" y="12" width="1" height="135" fill="#000090"/><rect x="215" y="12" width="1" height="135" fill="#000090"/><rect x="224" y="12" width="1" height="135" fill="#000090"/><rect x="233" y="12" width="1" height="135" fill="#0000ff"/><rect x="243" y="12" width="1" height="135" fill="#000090"/><rect x="252" y="12" width="1" height="135" fill="#000090"/><rect x="261" y="12" width="1" height="135" fill="#000090"/><rect x="270" y="12" width="1" height="135" fill="#000090"/><rect x="280" y="12" width="1" height="135" fill="#0000ff"/><rect x="289" y="12" width="1" height="135" fill="#000090"/><rect x="298" y="12" width="1" height="135" fill="#000090"/><rect x="308" y="12" width="1" height="135" fill="#000090"/><rect x="317" y="12" width="1" height="135" fill="#000090"/><rect x="326" y="12" width="1" height="135" fill="#0000ff"/><rect x="335" y="12" width="1" height="135" fill="#000090"/><rect x="345" y="12" width="1" height="135" fill="#000090"/><rect x="354" y="12" width="1" height="135" fill="#000090"/><rect x="363" y="12" width="1" height="135" fill="#000090"/><rect x="373" y="12" width="1" height="135" fill="#0000ff"/><rect x="382" y="12" width="1" height="135" fill="#000090"/><rect x="391" y="12" width="1" height="135" fill="#000090"/><rect x="401" y="12" width="1" height="135" fill="#000090"/><rect x="410" y="12" width="1" height="135" fill="#000090"/><rect x="419" y="12" width="1" height="135" fill="#0000ff"/><rect x="428" y="12" width="1" height="135" fill="#000090"/><rect x="438" y="12" width="1" height="135" fill="#000090"/><rect x="447" y="12" width="1" height="135" fill="#000090"/><rect x="456" y="12" width="1" height="135" fill="#000090"/><rect x="45" y="12" width="423" height="1" fill="#0000ff"/><rect x="46" y="26" width="422" height="1" fill="#000090"/><rect x="45" y="39" width="423" height="1" fill="#0000ff"/><rect x="46" y="52" width="422" height="1" fill="#000090"/><rect x="45" y="66" width="423" height="1" fill="#0000ff"/><rect x="46" y="79" width="422" height="1" fill="#000090"/><rect x="45" y="92" width="423" height="1" fill="#0000ff"/><rect x="46" y="106" width="422" height="1" fill="#000090"/><rect x="45" y="119" width="423" height="1" fill="#0000ff"/><rect x="46" y="132" width="422" height="1" fill="#000090"/><rect x="45" y="145" width="423" height="1" fill="#0000ff"/><rect x="48" y="133" width="1" height="13" fill="#80ff00"/><rect x="66" y="133" width="1" height="13" fill="#80ff00"/><rect x="108" y="133" width="1" height="13" fill="#80ff00"/><rect x="115" y="133" width="1" height="13" fill="#80ff00"/><rect x="181" y="120" width="1" height="26" fill="#80ff00"/><rect x="182" y="120" width="1" height="26" fill="#80ff00"/><rect x="183" y="133" width="1" height="13" fill="#80ff00"/><rect x="193" y="120" width="1" height="26" fill="#80ff00"/><rect x="212" y="133" width="1" height="13" fill="#80ff00"/><rect x="231" y="133" width="1" height="13" fill="#80ff00"/><rect x="264" y="133" width="1" height="13" fill="#80ff00"/><rect x="280" y="133" width="1" height="13" fill="#80ff00"/><rect x="290" y="133" width="1" height="13" fill="#80ff00"/><rect x="291" y="133" width="1" height="13" fill="#80ff00"/><rect x="312" y="120" width="1" height="26" fill="#80ff00"/><rect x="313" y="133" width="1" height="13" fill="#80ff00"/><rect x="435" y="12" width="1" height="133" fill="#d8d8d8"/></svg><div class="t tr ax" style="right:603px;top:294px;">10</div><div class="t tr ax" style="right:603px;top:321px;">8</div><div class="t tr ax" style="right:603px;top:348px;">6</div><div class="t tr ax" style="right:603px;top:374px;">4</div><div class="t tr ax" style="right:603px;top:401px;">2</div><div class="t ax" style="left:471px;top:294px;">10</div><div class="t ax" style="left:471px;top:321px;">8</div><div class="t ax" style="left:471px;top:348px;">6</div><div class="t ax" style="left:471px;top:374px;">4</div><div class="t ax" style="left:471px;top:401px;">2</div><div class="t ax" style="left:40px;top:438px;width:20px;text-align:center">0.0</div><div class="t ax" style="left:86px;top:438px;width:20px;text-align:center">0.5</div><div class="t ax" style="left:133px;top:438px;width:20px;text-align:center">1.0</div><div class="t ax" style="left:179px;top:438px;width:20px;text-align:center">1.5</div><div class="t ax" style="left:226px;top:438px;width:20px;text-align:center">2.0</div><div class="t ax" style="left:272px;top:438px;width:20px;text-align:center">2.5</div><div class="t ax" style="left:318px;top:438px;width:20px;text-align:center">3.0</div><div class="t ax" style="left:365px;top:438px;width:20px;text-align:center">3.5</div><div class="t ax" style="left:411px;top:438px;width:20px;text-align:center">4.0</div><div class="t ax" style="left:458px;top:438px;width:20px;text-align:center">4.5</div>
<div class="gb" style="left:491px;top:132px;width:140px;height:84px"></div>
<div class="t cap" style="left:498px;top:127px;background:rgb(252,252,253)">Disk-Info</div>
<div class="t " style="left:500px;top:142px;">Typ:</div>
<div class="t v" style="left:546px;top:142px;">DVD+R</div>
<div class="t " style="left:500px;top:159px;">ID:</div>
<div class="t v" style="left:546px;top:159px;">MCC 004</div>
<div class="t " style="left:500px;top:177px;">Datum:</div>
<div class="t v" style="left:546px;top:177px;">11 Dec 2007</div>
<div class="t " style="left:500px;top:195px;">Label:</div>
<div class="t v" style="left:546px;top:195px;letter-spacing:-0.35px">LOGICAL_VOLU</div>
<div class="gb" style="left:491px;top:223px;width:140px;height:205px"></div>
<div class="t cap" style="left:498px;top:219px;background:rgb(249,249,249)">Einstellungen</div>
<div class="cb" style="left:500px;top:233px;width:84px;height:21px"><div class="cbb" style="right:1px;top:1px;width:15px;height:17px"></div></div>
<div class="t " style="left:505px;top:238px;">4 X</div>
<div class="btn3" style="left:592px;top:232px;width:23px;height:23px"></div>
<svg style="position:absolute;left:596px;top:235px" width="14" height="16" viewBox="0 0 14 16">
<rect x="0.5" y="0.5" width="13" height="15" fill="#fff" stroke="#000"/>
<path d="M3.5 8V5.5Q3.5 4.5 4.5 4.5H7" fill="none" stroke="#109010" stroke-width="1.5"/><path d="M6.5 2L9.8 4.6L6.5 7.2Z" fill="#109010"/>
<path d="M10.5 8V10Q10.5 11 9.5 11H7" fill="none" stroke="#109010" stroke-width="1.5"/><path d="M7.5 8.4L4.2 11L7.5 13.6Z" fill="#109010"/>
</svg>
<div class="t " style="left:502px;top:265px;">Start:</div>
<div class="ed" style="left:554px;top:259px;width:60px;height:20px"></div>
<div class="t " style="left:558px;top:263px;">0000 MB</div>
<div class="t " style="left:502px;top:288px;">Ende:</div>
<div class="ed" style="left:554px;top:282px;width:60px;height:20px"></div>
<div class="t " style="left:558px;top:286px;">4267 MB</div>
<div class="ck" style="left:502px;top:304px"></div>
<div class="t " style="left:518px;top:306px;">Schnelles Scannen</div>
<div class="ck on" style="left:502px;top:322px"></div>
<svg style="position:absolute;left:502px;top:322px" width="13" height="13"><path d="M3 6.5L5.3 8.8L10 4" fill="none" stroke="#21a121" stroke-width="2"/></svg>
<div class="t " style="left:518px;top:324px;">C1/PIE anzeigen</div>
<div class="ck on" style="left:502px;top:337px"></div>
<svg style="position:absolute;left:502px;top:337px" width="13" height="13"><path d="M3 6.5L5.3 8.8L10 4" fill="none" stroke="#21a121" stroke-width="2"/></svg>
<div class="t " style="left:518px;top:339px;">C2/PIF anzeigen</div>
<div class="ck on" style="left:502px;top:353px"></div>
<svg style="position:absolute;left:502px;top:353px" width="13" height="13"><path d="M3 6.5L5.3 8.8L10 4" fill="none" stroke="#21a121" stroke-width="2"/></svg>
<div class="t " style="left:518px;top:355px;">Jitter anzeigen</div>
<div class="ck on hot" style="left:502px;top:369px"></div>
<svg style="position:absolute;left:502px;top:369px" width="13" height="13"><path d="M3 6.5L5.3 8.8L10 4" fill="none" stroke="#21a121" stroke-width="2"/></svg>
<div class="t " style="left:518px;top:371px;">Zeige Lesegeschw.</div>
<div class="ck dis on" style="left:502px;top:384px"></div>
<svg style="position:absolute;left:502px;top:384px" width="13" height="13"><path d="M3 6.5L5.3 8.8L10 4" fill="none" stroke="#c8c8c0" stroke-width="2"/></svg>
<div class="t dis" style="left:518px;top:386px;">Zeige Schreibgeschw.</div>
<div class="btn" style="left:528px;top:402px;width:96px;height:21px"></div>
<div class="t " style="left:528px;top:407px;width:96px;text-align:center">Erweitert</div>
<div class="gb" style="left:491px;top:433px;width:140px;height:27px"></div>
<div class="t " style="left:503px;top:441px;letter-spacing:-0.2px">Qualitätsindex:</div>
<div class="t tr v" style="right:24px;top:441px;">95</div>
<div class="gb" style="left:491px;top:465px;width:140px;height:57px"></div>
<div class="t " style="left:502px;top:475px;">Fortschritt:</div>
<div class="t tr v" style="right:24px;top:475px;">100 %</div>
<div class="t " style="left:502px;top:491px;">Position:</div>
<div class="t tr v" style="right:24px;top:491px;">4266 MB</div>
<div class="t " style="left:502px;top:506px;">Geschwindigkeit:</div>
<div class="t tr v" style="right:24px;top:506px;">3.98 X</div>
<div class="lgw" style="left:15px;top:466px;width:146px;height:57px"></div><div class="lg" style="left:14px;top:465px;width:146px;height:57px"></div><div class="lgc" style="left:23px;top:460px;width:53px;background:rgb(243,242,237)"></div><div class="sq" style="left:24px;top:462px;background:#00ffff"></div><div class="t " style="left:35px;top:460px;letter-spacing:-0.3px">PI Errors</div><div class="t " style="left:22px;top:476px;">Durchschnitt</div><div class="t tr v" style="right:494px;top:476px;">0.96</div><div class="t " style="left:22px;top:491px;">Maximum:</div><div class="t tr v" style="right:494px;top:491px;">11</div><div class="t " style="left:22px;top:506px;">Gesamt:</div><div class="t tr v" style="right:494px;top:506px;">16319</div>
<div class="lgw" style="left:173px;top:466px;width:146px;height:57px"></div><div class="lg" style="left:172px;top:465px;width:146px;height:57px"></div><div class="lgc" style="left:181px;top:460px;width:62px;background:rgb(243,242,237)"></div><div class="sq" style="left:182px;top:462px;background:#ffff00"></div><div class="t " style="left:193px;top:460px;letter-spacing:-0.3px">PI Failures</div><div class="t " style="left:181px;top:476px;">Durchschnitt</div><div class="t tr v" style="right:336px;top:476px;">0.00</div><div class="t " style="left:181px;top:491px;">Maximum:</div><div class="t tr v" style="right:336px;top:491px;">2</div><div class="t " style="left:181px;top:506px;">Gesamt:</div><div class="t tr v" style="right:336px;top:506px;">182</div>
<div class="lgw" style="left:332px;top:466px;width:147px;height:43px"></div><div class="lg" style="left:331px;top:465px;width:147px;height:43px"></div><div class="lgc" style="left:340px;top:460px;width:35px;background:rgb(243,242,237)"></div><div class="sq" style="left:341px;top:462px;background:#ff00ff"></div><div class="t " style="left:352px;top:460px;letter-spacing:-0.3px">Jitter</div><div class="t " style="left:340px;top:476px;">Durchschnitt</div><div class="t tr v" style="right:176px;top:476px;">-</div><div class="t " style="left:340px;top:491px;">Maximum:</div><div class="t tr v" style="right:176px;top:491px;">-</div>
<div class="t " style="left:340px;top:510px;">PO Ausfälle:</div>
<div class="t tr v" style="right:176px;top:510px;">-</div>
<div class="fr" style="left:0;top:29px;width:2px;height:502px;background:#0019cf"></div>
<div class="fr" style="left:2px;top:29px;width:2px;height:502px;background:linear-gradient(to right,#1a6cf0,#0a5ae8)"></div>
<div class="fr" style="left:4px;top:30px;width:1px;height:497px;background:#fdf8e4"></div>
<div class="fr" style="left:640px;top:30px;width:1px;height:497px;background:#fdf8e4"></div>
<div class="fr" style="left:4px;top:526px;width:637px;height:1px;background:#fdf8e4"></div>
<div class="fr" style="left:641px;top:29px;width:4px;height:502px;background:linear-gradient(to right,#0a5cf5,#0040d8 30%,#0024a8 65%,#00168c)"></div>
<div class="fr" style="left:0;top:527px;width:645px;height:4px;background:linear-gradient(to bottom,#0855dd,#0040d0 30%,#0020a8 60%,#001a98)"></div>
</div></body></html>
